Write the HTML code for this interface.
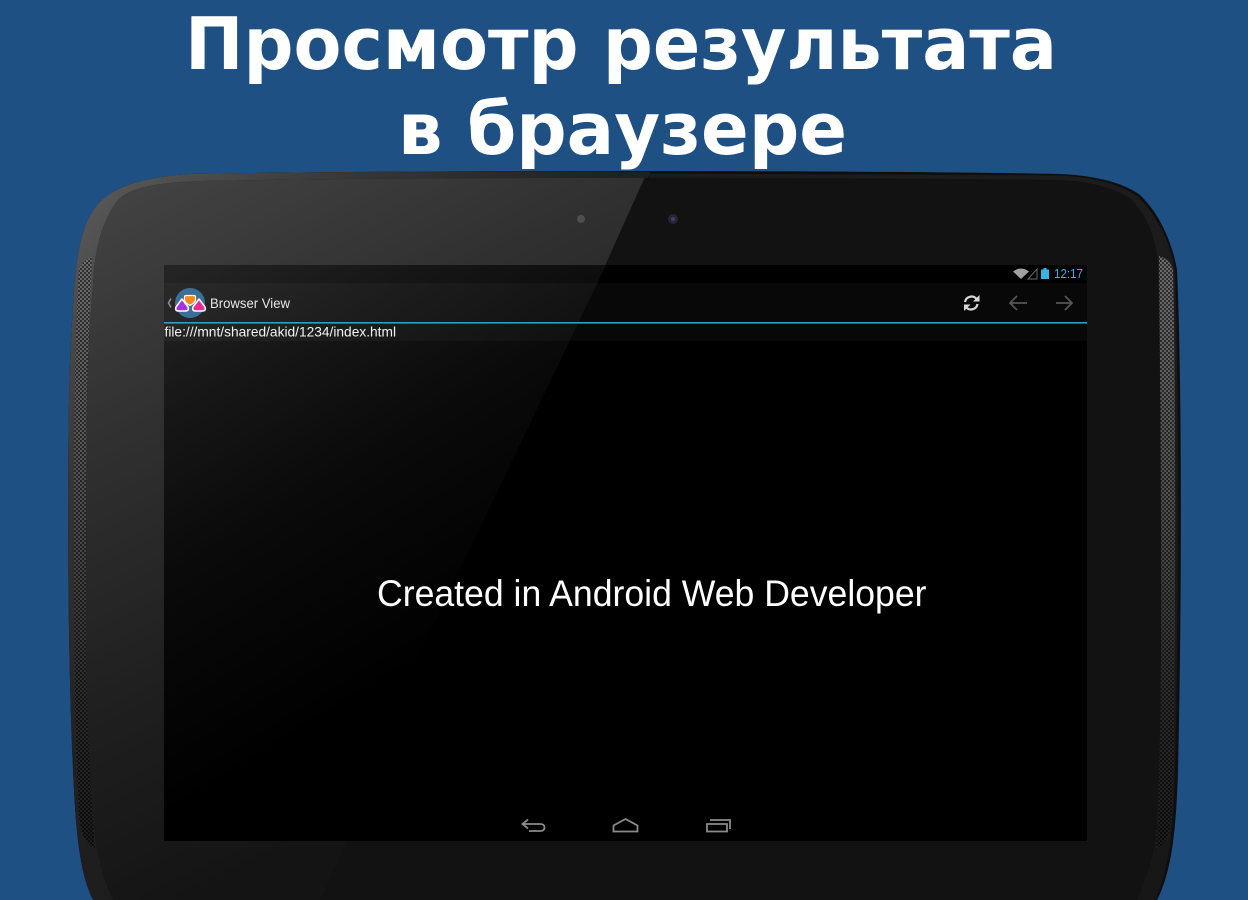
<!DOCTYPE html>
<html><head><meta charset="utf-8">
<style>
html,body{margin:0;padding:0;background:#1f5083;}
svg{display:block;}
</style></head>
<body>
<svg xmlns="http://www.w3.org/2000/svg" width="1248" height="900" viewBox="0 0 1248 900">
<defs>
<linearGradient id="rim" gradientUnits="userSpaceOnUse" x1="90" y1="180" x2="560" y2="620">
<stop offset="0" stop-color="#5a5a5a"/><stop offset=".3" stop-color="#363636"/><stop offset=".6" stop-color="#202020"/><stop offset="1" stop-color="#1a1a1a"/></linearGradient>
<linearGradient id="rimR" gradientUnits="userSpaceOnUse" x1="0" y1="170" x2="0" y2="900">
<stop offset="0" stop-color="#1c1c1c"/><stop offset="1" stop-color="#171717"/></linearGradient>
<linearGradient id="face" gradientUnits="userSpaceOnUse" x1="100" y1="180" x2="400" y2="800">
<stop offset="0" stop-color="#444"/><stop offset=".35" stop-color="#303030"/><stop offset=".7" stop-color="#1f1f1f"/><stop offset="1" stop-color="#141414"/></linearGradient>
<linearGradient id="scr" gradientUnits="userSpaceOnUse" x1="130" y1="240" x2="400" y2="680">
<stop offset="0" stop-color="#2a2a2a"/><stop offset=".3" stop-color="#181818"/><stop offset=".6" stop-color="#0a0a0a"/><stop offset="1" stop-color="#000"/></linearGradient>
<pattern id="dots" width="4" height="4" patternUnits="userSpaceOnUse"><rect width="4" height="4" fill="#6d6d6d"/><circle cx="1" cy="1" r="1.100" fill="#2a2a2a"/><circle cx="3" cy="3" r="1.100" fill="#2a2a2a"/></pattern>
<linearGradient id="spk" gradientUnits="userSpaceOnUse" x1="0" y1="257" x2="0" y2="850"><stop offset="0" stop-color="#000" stop-opacity="0"/><stop offset=".4" stop-color="#000" stop-opacity=".25"/><stop offset=".75" stop-color="#000" stop-opacity=".6"/><stop offset="1" stop-color="#000" stop-opacity=".75"/></linearGradient>
<clipPath id="faceClip"><path d="M113 900 C103 878 98 860 95 835 C90 790 88 740 87 680 C86 600 86 480 87 400 C88 350 90 320 93 285 C94 255 100 225 117 201 C128 189 150 183 200 181 C400 177 850 177 1060 180 C1085 181 1110 186 1130 198 C1148 215 1156 240 1158 265 C1160 340 1161 480 1161 600 C1161 700 1160 770 1157 825 C1155 850 1150 870 1137 900 Z"/></clipPath>
</defs>
<rect width="1248" height="900" fill="#1f5083"/>

<!-- tablet body -->
<path d="M93 900 C83 880 77 850 74 790 C68 680 67 500 69 400 C70 350 72 320 74 290 C76 262 80 232 92 212 C105 192 130 178 190 174 C400 170 850 170 1060 174 C1085 175 1120 180 1140 195 C1158 212 1172 240 1177 270 C1182 380 1182 600 1178 770 C1176 840 1170 875 1157 900 Z" fill="#0e0e0e"/>
<path d="M93 900 C83 880 77 850 74 790 C68 680 67 500 69 400 C70 350 72 320 74 290 C76 262 80 232 92 212 C105 192 130 178 190 174 C350 171 500 171 650 172 L400 900 Z" fill="url(#rim)"/>
<path d="M1060 175.500 C1085 176.500 1118 182 1138 197 C1156 214 1170 241 1175 270 C1179 380 1179 600 1175 770 C1173 840 1167 875 1155 900 L400 900 L650 173.500 Z" fill="url(#rimR)"/>
<!-- speakers -->
<path d="M92 257 C85 260 81 264 79 270 C75 330 74 420 74 500 C74 650 75 750 79 815 C81 835 86 844 95 849 C91 790 88 740 87 680 C86 600 86 480 87 400 C88 350 90 300 92 257 Z" fill="url(#dots)"/>
<path d="M92 257 C85 260 81 264 79 270 C75 330 74 420 74 500 C74 650 75 750 79 815 C81 835 86 844 95 849 C91 790 88 740 87 680 C86 600 86 480 87 400 C88 350 90 300 92 257 Z" fill="url(#spk)"/>
<path d="M1159 256 C1166 258 1171 262 1173 270 C1176 380 1176 680 1172 815 C1170 835 1166 844 1156 849 C1160 770 1161 700 1161 600 C1161 480 1160 340 1159 256 Z" fill="url(#dots)"/>
<path d="M1159 256 C1166 258 1171 262 1173 270 C1176 380 1176 680 1172 815 C1170 835 1166 844 1156 849 C1160 770 1161 700 1161 600 C1161 480 1160 340 1159 256 Z" fill="url(#spk)"/>

<!-- face -->
<path d="M113 900 C103 878 98 860 95 835 C90 790 88 740 87 680 C86 600 86 480 87 400 C88 350 90 320 93 285 C94 255 100 225 117 201 C128 189 150 183 200 181 C400 177 850 177 1060 180 C1085 181 1110 186 1130 198 C1148 215 1156 240 1158 265 C1160 340 1161 480 1161 600 C1161 700 1160 770 1157 825 C1155 850 1150 870 1137 900 Z" fill="#121212"/>
<g clip-path="url(#faceClip)"><polygon points="60,170 648,170 320,900 60,900" fill="url(#face)"/></g>

<!-- camera / sensor -->
<circle cx="581" cy="219" r="4" fill="#4f4f4f"/>
<circle cx="673" cy="219" r="5" fill="#242636"/><circle cx="673" cy="219" r="2" fill="#3d4160"/>

<!-- screen -->
<rect x="164" y="265" width="923" height="576" fill="#000"/>
<polygon points="164,265 606,265 330,841 164,841" fill="url(#scr)"/>
<rect x="164" y="283" width="923" height="58" fill="#fff" opacity=".03"/>
<rect x="164" y="322" width="923" height="1.600" fill="#2f9fc8"/>
<!-- status bar -->
<path d="M1013 271.500 Q1021 265.500 1029 271.500 L1021 279 Z" fill="#a0a0a0"/>
<path d="M1028 279 L1037 279 L1037 269 Z" fill="none" stroke="#6a6a6a" stroke-width="1"/>
<rect x="1041" y="269.500" width="8" height="9.500" fill="#33b5e5"/><rect x="1043.500" y="268" width="3" height="2" fill="#33b5e5"/>
<text x="1054" y="278" font-family="'Liberation Sans',sans-serif" font-size="12.500" fill="#33b5e5" textLength="29" lengthAdjust="spacingAndGlyphs">12:17</text>

<!-- action bar -->
<path d="M171 298.500 L168.500 303 L171 307.500" fill="none" stroke="#8a8a8a" stroke-width="1.600"/>
<circle cx="190" cy="303" r="15" fill="#3c6f98"/>
<path d="M186 295.500 h8 q1.500 0 1.500 1.500 v3 q0 2.500 -5.500 5.500 q-5.500 -3 -5.500 -5.500 v-3 q0 -1.500 1.500 -1.500z" fill="#f08a1e" stroke="#fff" stroke-width="1.200"/>
<path d="M182 299 L176 307 Q174.500 311 179 311 H185 Q189.500 311 188 307 Z" fill="#a531e0" stroke="#fff" stroke-width="1.500" stroke-linejoin="round"/>
<path d="M199 299 L193 307 Q191.500 311 196 311 H202 Q206.500 311 205 307 Z" fill="#e82a96" stroke="#fff" stroke-width="1.500" stroke-linejoin="round"/>
<text x="210" y="308" font-family="'Liberation Sans',sans-serif" font-size="13.500" fill="#e6e6e6" textLength="80" lengthAdjust="spacingAndGlyphs">Browser View</text>

<!-- refresh -->
<g fill="none" stroke="#d8d8d8" stroke-width="2.200">
<path d="M965 302 A6.500 6.500 0 0 1 976.500 299"/>
<path d="M977.500 304 A6.500 6.500 0 0 1 966 307"/>
</g>
<path d="M979.500 295 V301.500 H973 Z" fill="#d8d8d8"/>
<path d="M964 311 V304.500 H970.500 Z" fill="#d8d8d8"/>
<!-- arrows -->
<g fill="none" stroke="#555" stroke-width="1.800">
<path d="M1010 303 H1027 M1017 296 L1010 303 L1017 310"/>
<path d="M1056 303 H1072 M1065 296 L1072 303 L1065 310"/>
</g>

<!-- url -->
<text x="164.500" y="336.500" font-family="'Liberation Sans',sans-serif" font-size="14" fill="#f2f2f2" textLength="231.500" lengthAdjust="spacingAndGlyphs">file:///mnt/shared/akid/1234/index.html</text>

<!-- center -->
<text x="377" y="606" font-family="'Liberation Sans',sans-serif" font-size="37" fill="#fff" textLength="549.500" lengthAdjust="spacingAndGlyphs">Created in Android Web Developer</text>

<!-- nav -->
<g fill="none" stroke="#8a8a8a" stroke-width="1.800">
<path d="M528 819.500 L522.500 824 L528 828.500"/>
<path d="M523 824 H540 Q544.500 824 544.500 827.500 Q544.500 831 540 831 H529"/>
<path d="M613.500 825.500 L625.500 819 L637.500 825.500 V831.500 H613.500 Z"/>
<path d="M707 824 H727 V831.500 H707 Z"/>
<path d="M710 820 H730 V829"/>
</g>

<!-- title -->
<g font-family="'DejaVu Sans',sans-serif" font-weight="700" font-size="72" fill="#fff" text-anchor="middle">
<text x="621" y="69" textLength="872" lengthAdjust="spacingAndGlyphs">Просмотр результата</text>
<text x="622.500" y="154" textLength="449" lengthAdjust="spacingAndGlyphs">в браузере</text>
</g>
</svg>
</body></html>
